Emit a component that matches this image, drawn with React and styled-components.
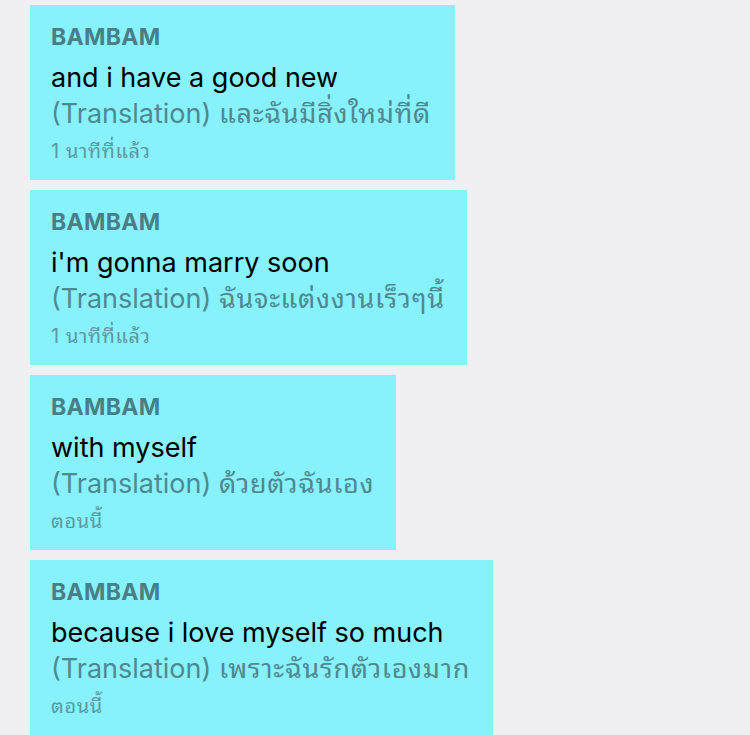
import React from "react";
import styled, { createGlobalStyle } from "styled-components";

const Global = createGlobalStyle`
  html, body {
    margin: 0;
    padding: 0;
    background: #efeff4;
  }
  body {
    font-family: Inter, "Noto Sans Thai Looped", "Noto Sans", sans-serif;
    -webkit-font-smoothing: antialiased;
  }
`;

const Feed = styled.div`
  display: flex;
  flex-direction: column;
  align-items: flex-start;
  gap: 10px;
  padding: 5px 0 0 30px;
  min-height: 735px;
  box-sizing: border-box;
  overflow: hidden;
`;

const Bubble = styled.div`
  box-sizing: border-box;
  width: ${(p) => p.$w}px;
  height: 175px;
  background: #87f2fb;
  padding: 17px 21px 15px 21px;
  display: flex;
  flex-direction: column;
  flex-shrink: 0;
`;

const Name = styled.div`
  font-size: 23px;
  line-height: 30px;
  font-weight: 700;
  color: #4a7e86;
  letter-spacing: 0.3px;
`;

const Message = styled.div`
  margin-top: 8px;
  font-size: 27px;
  line-height: 36px;
  color: #000;
  white-space: nowrap;
`;

const Translation = styled.div`
  font-size: 27px;
  line-height: 36px;
  color: #4f8990;
  white-space: nowrap;
`;

const Thai = styled.span`
  letter-spacing: ${(p) => p.$ls || 0}px;
`;

const Time = styled.div`
  margin-top: 5px;
  font-size: 20px;
  line-height: 28px;
  color: #5c99a1;
  white-space: nowrap;
`;

const messages = [
  { w: 425, text: "and i have a good new", tr: "และฉันมีสิ่งใหม่ที่ดี", time: "1 นาทีที่แล้ว" },
  { w: 437, text: "i'm gonna marry soon", tr: "ฉันจะแต่งงานเร็วๆนี้", time: "1 นาทีที่แล้ว" },
  { w: 366, text: "with myself", tr: "ด้วยตัวฉันเอง", time: "ตอนนี้" },
  { w: 463, text: "because i love myself so much", tr: "เพราะฉันรักตัวเองมาก", time: "ตอนนี้" },
];

export default function App() {
  return (
    <>
      <Global />
      <Feed>
        {messages.map((m, i) => (
          <Bubble key={i} $w={m.w}>
            <Name>BAMBAM</Name>
            <Message>{m.text}</Message>
            <Translation>
              (Translation) <Thai $ls={0.7}>{m.tr}</Thai>
            </Translation>
            <Time>
              <Thai $ls={0.6}>{m.time}</Thai>
            </Time>
          </Bubble>
        ))}
      </Feed>
    </>
  );
}
